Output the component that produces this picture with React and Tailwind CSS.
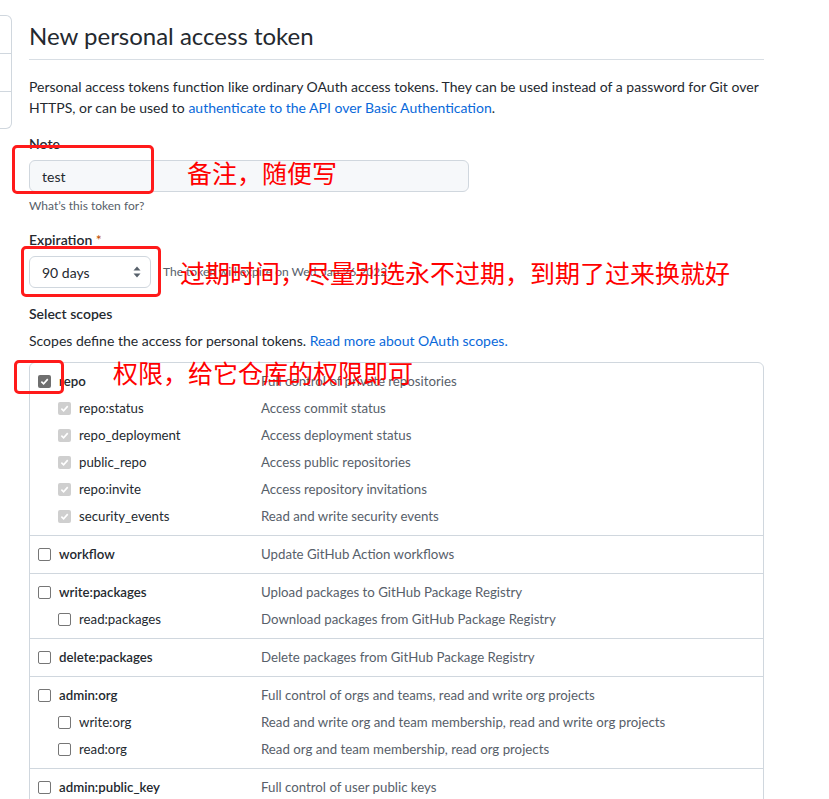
import React from 'react';

const scopes = [
    {
        items: [
            { name: 'repo', desc: 'Full control of private repositories', state: 'checked' },
            { name: 'repo:status', desc: 'Access commit status', state: 'implied' },
            { name: 'repo_deployment', desc: 'Access deployment status', state: 'implied' },
            { name: 'public_repo', desc: 'Access public repositories', state: 'implied' },
            { name: 'repo:invite', desc: 'Access repository invitations', state: 'implied' },
            { name: 'security_events', desc: 'Read and write security events', state: 'implied' },
        ],
    },
    { items: [{ name: 'workflow', desc: 'Update GitHub Action workflows' }] },
    {
        items: [
            { name: 'write:packages', desc: 'Upload packages to GitHub Package Registry' },
            { name: 'read:packages', desc: 'Download packages from GitHub Package Registry' },
        ],
    },
    { items: [{ name: 'delete:packages', desc: 'Delete packages from GitHub Package Registry' }] },
    {
        items: [
            { name: 'admin:org', desc: 'Full control of orgs and teams, read and write org projects' },
            { name: 'write:org', desc: 'Read and write org and team membership, read and write org projects' },
            { name: 'read:org', desc: 'Read org and team membership, read org projects' },
        ],
    },
    { items: [{ name: 'admin:public_key', desc: 'Full control of user public keys' }] },
];

// Kotak centang ala Chrome di Windows
function Checkbox({ state }) {
    if (state === 'checked' || state === 'implied') {
        const bg = state === 'checked' ? 'bg-[#6f6f6f]' : 'bg-[#cfcfcf]';
        return (
            <span className={`w-[13px] h-[13px] rounded-[2px] ${bg} flex items-center justify-center shrink-0`}>
                <svg width="9" height="9" viewBox="0 0 10 10">
                    <path d="M1.5 5.2 L4 7.6 L8.6 2.4" fill="none" stroke="#fff" strokeWidth="1.8" />
                </svg>
            </span>
        );
    }
    return <span className="w-[13px] h-[13px] rounded-[2px] border border-[#767676] bg-white shrink-0" />;
}

export default function App() {
    return (
        <div className="relative w-[829px] h-[799px] overflow-hidden bg-white text-[#24292f] font-['Lato','Liberation_Sans',sans-serif] text-[14px]">
            <div className="flex">
                {/* Sidebar (terpotong) */}
                <div className="w-[12px] shrink-0 pt-[15px]">
                    <div className="h-[114px] border border-l-0 border-[#d0d7de] rounded-r-[6px] flex flex-col">
                        <div className="h-[38px] border-b border-[#d0d7de]" />
                        <div className="h-[38px] border-b border-[#d0d7de]" />
                    </div>
                </div>

                {/* Konten utama */}
                <div className="ml-[17px] w-[735px]">
                    <div className="pt-[21px] pb-[8px] border-b border-[#d8dee4]">
                        <h1 className="text-[24px] leading-[30px] font-normal">New personal access token</h1>
                    </div>

                    <p className="mt-[16px] leading-[21px]">
                        Personal access tokens function like ordinary OAuth access tokens. They can be used instead of a password for Git over HTTPS, or can be used to{' '}
                        <span className="text-[#0969da]">authenticate to the API over Basic Authentication</span>.
                    </p>

                    <div className="mt-[16px] leading-[20px] font-semibold">Note</div>
                    <div className="mt-[6px] w-[440px] h-[32px] bg-[#f6f8fa] border border-[#d0d7de] rounded-[6px] flex items-center px-[12px]">
                        test
                    </div>
                    <div className="mt-[5px] text-[12px] leading-[18px] text-[#57606a]">What’s this token for?</div>

                    <div className="mt-[15px] leading-[20px] font-semibold">
                        Expiration <span className="text-[#bc4c00] font-normal">*</span>
                    </div>
                    <div className="mt-[6px] flex items-center h-[32px]">
                        <div className="w-[122px] h-[32px] border border-[#d0d7de] rounded-[6px] flex items-center justify-between pl-[12px] pr-[8px]">
                            <span>90 days</span>
                            <svg width="10" height="14" viewBox="0 0 10 14">
                                <path d="M5 1.5 L8.5 5.5 H1.5 Z" fill="#57606a" />
                                <path d="M5 12.5 L8.5 8.5 H1.5 Z" fill="#57606a" />
                            </svg>
                        </div>
                        <span className="ml-[12px] text-[12px] text-[#57606a]">The token will expire on Wed, Jan 26 2022</span>
                    </div>

                    <div className="mt-[16px] leading-[20px] font-semibold">Select scopes</div>
                    <p className="mt-[6px] leading-[21px]">
                        Scopes define the access for personal tokens. <span className="text-[#0969da]">Read more about OAuth scopes.</span>
                    </p>

                    <div className="mt-[11px] border border-[#d0d7de] rounded-[6px] text-[13.25px]">
                        {scopes.map((group, gi) => (
                            <div key={gi} className={`py-[5px] ${gi > 0 ? 'border-t border-[#d0d7de]' : ''}`}>
                                {group.items.map((item, ii) => (
                                    <div key={item.name} className="flex items-center h-[27px]">
                                        <div className={`w-[231px] flex items-center gap-[8px] ${ii === 0 ? 'pl-[8px] font-semibold' : 'pl-[28px]'}`}>
                                            <Checkbox state={item.state} />
                                            <span>{item.name}</span>
                                        </div>
                                        <div className="text-[#57606a]">{item.desc}</div>
                                    </div>
                                ))}
                            </div>
                        ))}
                    </div>
                </div>
            </div>

            {/* Anotasi merah */}
            <div className="absolute left-[12px] top-[145px] w-[142px] h-[49px] border-[3px] border-[#ff1a1a] rounded-[5px]" />
            <div className="absolute left-[21px] top-[246px] w-[140px] h-[51px] border-[3px] border-[#ff1a1a] rounded-[5px]" />
            <div className="absolute left-[14px] top-[360px] w-[50px] h-[34px] border-[3px] border-[#ff1a1a] rounded-[5px]" />

            <div className="absolute left-[187px] top-[159px] text-[25px] leading-[26px] text-[#ff0000] font-['Noto_Sans_CJK_SC',sans-serif]">备注，随便写</div>
            <div className="absolute left-[180px] top-[259px] text-[25px] leading-[26px] text-[#ff0000] font-['Noto_Sans_CJK_SC',sans-serif]">过期时间，尽量别选永不过期，到期了过来换就好</div>
            <div className="absolute left-[113px] top-[359px] text-[25px] leading-[26px] text-[#ff0000] font-['Noto_Sans_CJK_SC',sans-serif]">权限，给它仓库的权限即可</div>
        </div>
    );
}
